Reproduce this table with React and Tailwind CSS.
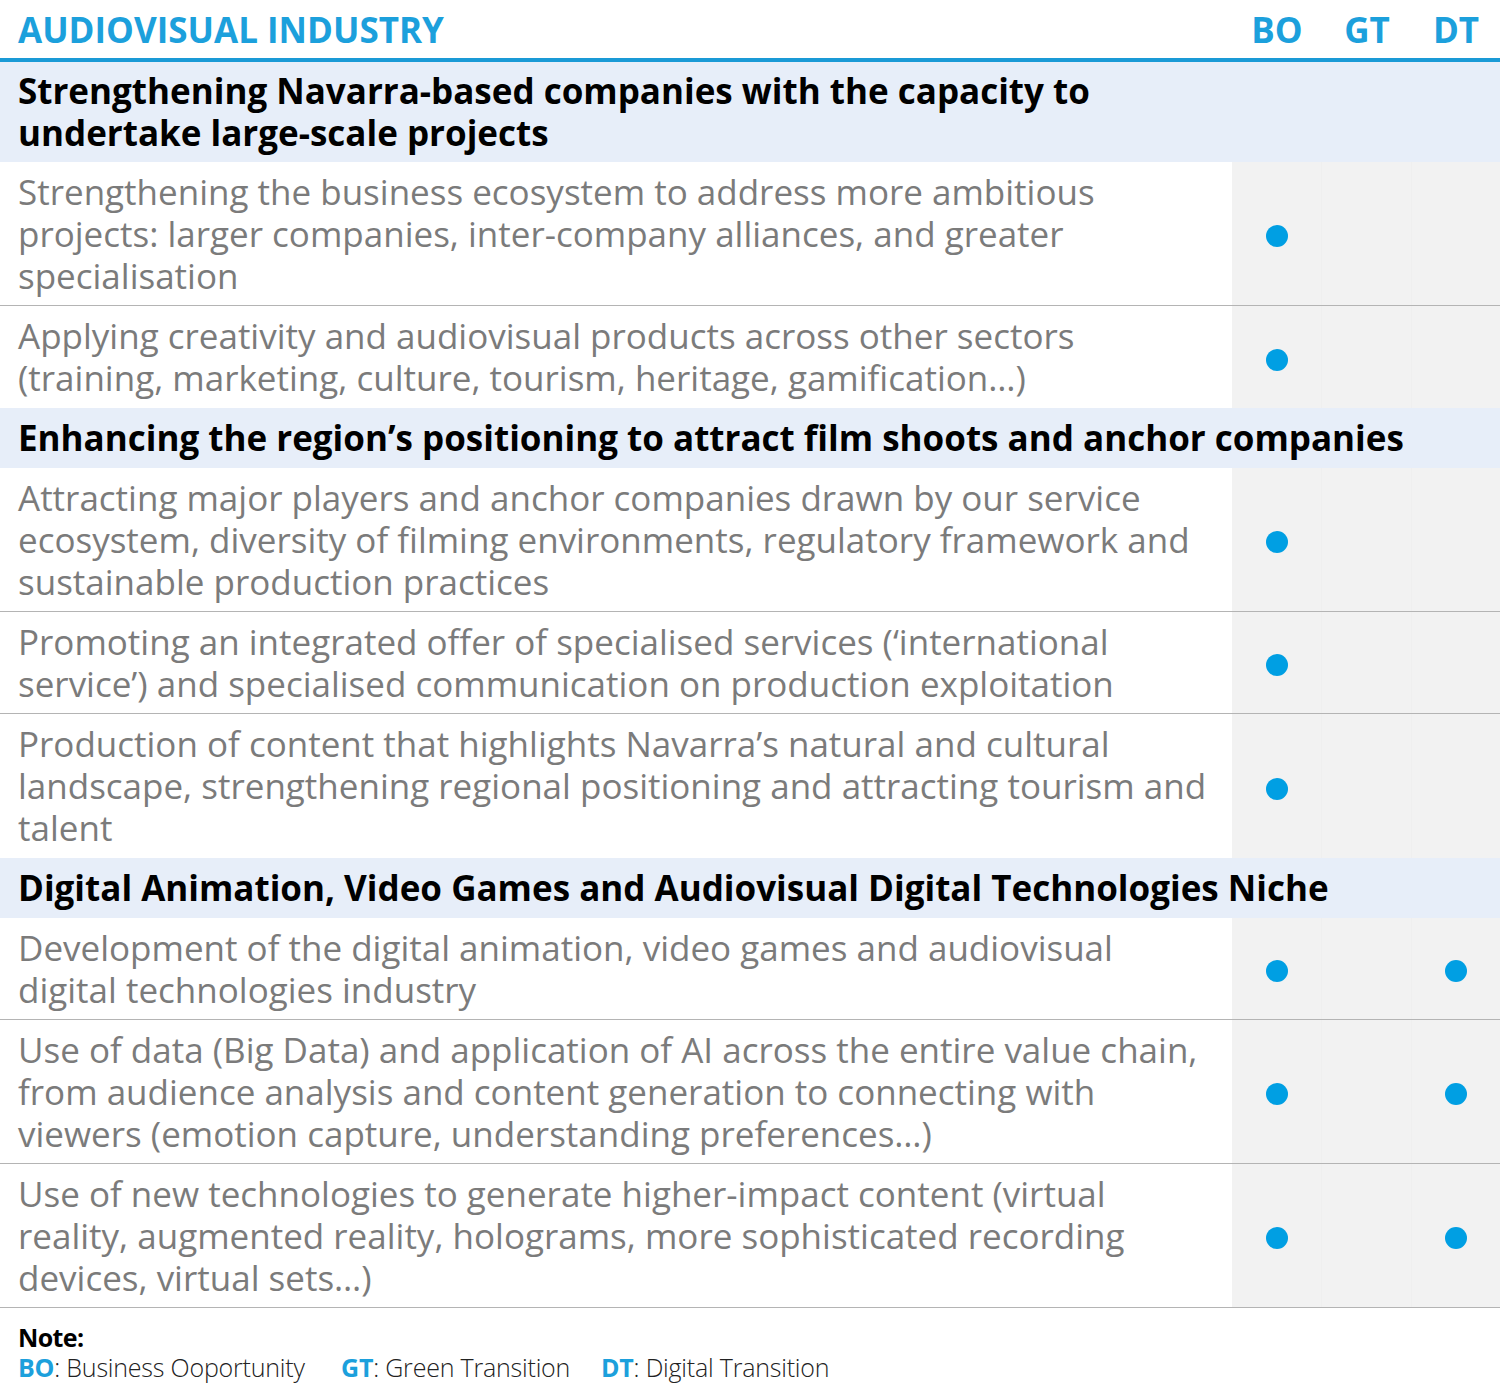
const groups = [
  {
    title: [
      "Strengthening Navarra-based companies with the capacity to",
      "undertake large-scale projects",
    ],
    rows: [
      {
        lines: [
          "Strengthening the business ecosystem to address more ambitious",
          "projects: larger companies, inter-company alliances, and greater",
          "specialisation",
        ],
        marks: [true, false, false],
      },
      {
        lines: [
          "Applying creativity and audiovisual products across other sectors",
          "(training, marketing, culture, tourism, heritage, gamification…)",
        ],
        marks: [true, false, false],
      },
    ],
  },
  {
    title: ["Enhancing the region’s positioning to attract film shoots and anchor companies"],
    rows: [
      {
        lines: [
          "Attracting major players and anchor companies drawn by our service",
          "ecosystem, diversity of filming environments, regulatory framework and",
          "sustainable production practices",
        ],
        marks: [true, false, false],
      },
      {
        lines: [
          "Promoting an integrated offer of specialised services (‘international",
          "service’) and specialised communication on production exploitation",
        ],
        marks: [true, false, false],
      },
      {
        lines: [
          "Production of content that highlights Navarra’s natural and cultural",
          "landscape, strengthening regional positioning and attracting tourism and",
          "talent",
        ],
        marks: [true, false, false],
      },
    ],
  },
  {
    title: ["Digital Animation, Video Games and Audiovisual Digital Technologies Niche"],
    rows: [
      {
        lines: [
          "Development of the digital animation, video games and audiovisual",
          "digital technologies industry",
        ],
        marks: [true, false, true],
      },
      {
        lines: [
          "Use of data (Big Data) and application of AI across the entire value chain,",
          "from audience analysis and content generation to connecting with",
          "viewers (emotion capture, understanding preferences…)",
        ],
        marks: [true, false, true],
      },
      {
        lines: [
          "Use of new technologies to generate higher-impact content (virtual",
          "reality, augmented reality, holograms, more sophisticated recording",
          "devices, virtual sets…)",
        ],
        marks: [true, false, true],
      },
    ],
  },
];

function Row({ row, last }) {
  return (
    <div className={"flex " + (last ? "" : "border-b border-[#b4b4b4]")}>
      <div
        className={
          "min-w-0 flex-1 pl-[18px] text-[35px] leading-[42px] text-[#7b7b7b] " +
          (last ? "py-[9px]" : "pt-[9px] pb-[8px]")
        }
      >
        {row.lines.map((l, i) => (
          <div key={i} className="whitespace-nowrap">
            {l}
          </div>
        ))}
      </div>
      <div className="flex w-[268px] shrink-0 bg-[#f2f2f2]">
        {row.marks.map((on, i) => (
          <div
            key={i}
            className={
              "flex items-center justify-center pt-[5px] " +
              (i < 2 ? "w-[90px] border-r border-[#efefef]" : "w-[88px]")
            }
          >
            {on && <span className="block h-[22px] w-[22px] rounded-full bg-[#009fe3]" />}
          </div>
        ))}
      </div>
    </div>
  );
}

export default function App() {
  return (
    <div className="w-[1500px] bg-white font-['Open_Sans',sans-serif]">
      <div className="flex h-[62px] items-center border-b-4 border-[#1a9ad6] pt-[2px] text-[35px] font-bold text-[#1ca0dc]">
        <div className="flex-1 pl-[18px]">AUDIOVISUAL INDUSTRY</div>
        <div className="flex w-[268px]">
          <div className="w-[90px] text-center">BO</div>
          <div className="w-[90px] text-center">GT</div>
          <div className="w-[88px] text-center">DT</div>
        </div>
      </div>

      {groups.map((g, gi) => (
        <div key={gi}>
          <div
            className={
              "bg-[#e7eef9] pl-[18px] text-[35px] font-bold leading-[42px] text-black " +
              (g.title.length > 1 ? "py-[8px]" : "py-[9px]")
            }
          >
            {g.title.map((t, i) => (
              <div key={i} className="whitespace-nowrap">
                {t}
              </div>
            ))}
          </div>
          {g.rows.map((r, ri) => (
            <Row
              key={ri}
              row={r}
              last={ri === g.rows.length - 1 && gi !== groups.length - 1}
            />
          ))}
        </div>
      ))}

      <div className="pl-[18px] pt-[14px] pb-[10px] text-[25px] leading-[30px]">
        <div className="font-bold text-black tracking-[-0.6px]">Note:</div>
        <div className="flex font-light text-[#222] tracking-[-0.2px]">
          <span className="w-[323px] shrink-0">
            <b className="font-bold text-[#1ca0dc]">BO</b>: Business Ooportunity
          </span>
          <span className="w-[260px] shrink-0">
            <b className="font-bold text-[#1ca0dc]">GT</b>: Green Transition
          </span>
          <span>
            <b className="font-bold text-[#1ca0dc]">DT</b>: Digital Transition
          </span>
        </div>
      </div>
    </div>
  );
}
